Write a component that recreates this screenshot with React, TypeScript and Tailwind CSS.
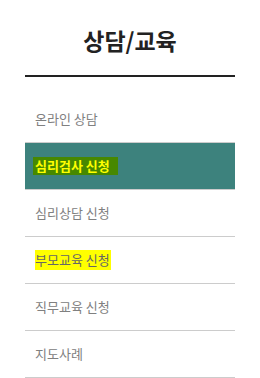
import React from 'react';

const items = [
  { label: '온라인 상담' },
  { label: '심리검사 신청', active: true },
  { label: '심리상담 신청' },
  { label: '부모교육 신청', mark: true },
  { label: '직무교육 신청' },
  { label: '지도사례' },
];

export default function App() {
  return (
    <div
      className="w-[260px] h-[378px] bg-white overflow-hidden"
      style={{ fontFamily: '"Noto Sans CJK KR", "Noto Sans", sans-serif' }}
    >
      <div className="mx-[25px]">
        <h2 className="pt-[24px] h-[77px] text-center text-[23px] leading-[32px] font-bold text-[#222] border-b-2 border-[#222]">
          상담/교육
        </h2>
        <ul className="mt-[19px]">
          {items.map((item) => (
            <li
              key={item.label}
              className={`h-[47px] flex items-center pl-[10px] border-b border-[#cccccc] ${
                item.active ? 'bg-[#3d827d]' : ''
              }`}
            >
              {item.active ? (
                <span className="bg-[#478800] text-[#ffff00] font-bold text-[13px] leading-[18px] pr-[8px] pl-[2px] -ml-[2px]">
                  {item.label}
                </span>
              ) : item.mark ? (
                <span className="bg-[#ffff00] text-[#666] text-[13px] leading-[20px] pr-[1px]">{item.label}</span>
              ) : (
                <span className="text-[#808080] text-[13px] leading-[20px]">{item.label}</span>
              )}
            </li>
          ))}
        </ul>
      </div>
    </div>
  );
}
